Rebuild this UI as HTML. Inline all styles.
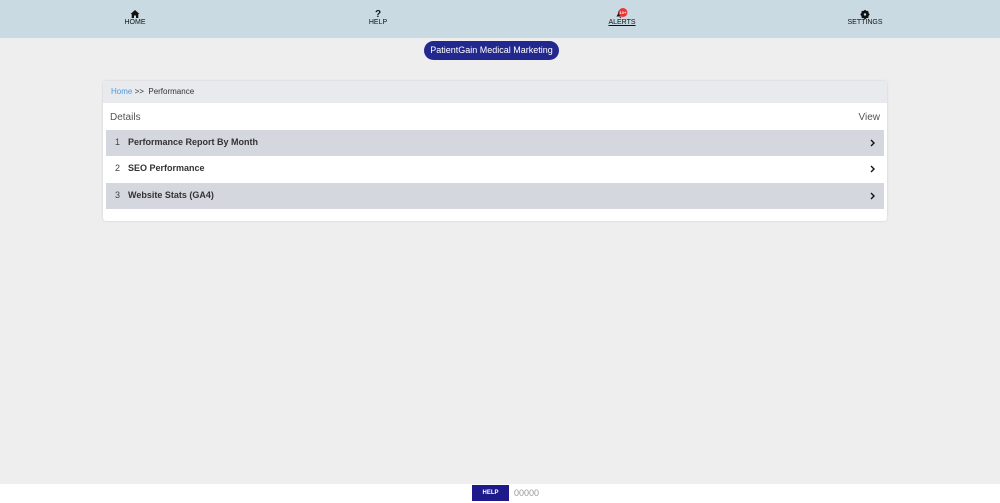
<!DOCTYPE html>
<html><head><style>
body{margin:0;width:1000px;height:503px;background:#eeeeee;font-family:"Liberation Sans",sans-serif;position:relative;overflow:hidden}
.nav{position:absolute;top:0;left:0;width:1000px;height:38px;background:#c9dae3}
.ni{position:absolute;top:10px;font-size:7px;color:#111;text-align:center;transform:translateX(-50%)}
.ni .ic{height:9px;line-height:9px;font-size:10px;font-weight:bold}
.pill{position:absolute;left:424px;top:41px;width:135px;height:19px;border-radius:10px;background:#23288f;color:#fff;font-size:9px;text-align:center;line-height:19px}
.card{position:absolute;left:103px;top:81px;width:784px;height:140px;background:#fff;border-radius:3px;box-shadow:0 0 2px #ccc}
.bc{height:22px;background:#e8eaed;font-size:8px;line-height:22px;padding-left:8px;color:#333}
.bc a{color:#4a9be0}
.hd{height:26px;font-size:10px;color:#555;line-height:30px;padding:0 7px}
.row{position:absolute;left:3px;width:778px;height:26px;font-size:9px;font-weight:bold;color:#333;line-height:25px}
.row .n{position:absolute;left:9px;font-weight:normal;color:#444;font-size:9px}
.row .t{position:absolute;left:22px}
.row .c{position:absolute;right:9px;top:9px}
.g{background:#d4d7de}
.foot{position:absolute;top:484px;left:0;width:1000px;height:19px;background:#fff}
.hb{position:absolute;left:472px;top:485px;width:37px;height:16px;background:#1e1a8c;color:#fff;font-size:6px;font-weight:bold;text-align:center;line-height:16px}
</style></head><body>
<div class="nav">
<div class="ni" style="left:135px"><div class="ic"><svg width="9" height="8" viewBox="0 0 9 8"><path d="M4.5 0L0 4h1.2v4h2.3V5.5h2V8h2.3V4H9z" fill="#111"/></svg></div>HOME</div>
<div class="ni" style="left:378px"><div class="ic">?</div>HELP</div>
<div class="ni" style="left:622px;text-decoration:underline"><div class="ic" style="position:relative"><svg width="8" height="8" viewBox="0 0 8 8" style="position:relative;left:-2px"><path d="M4 0C2 0 1.5 2 1.5 4L0 6.5h8L6.5 4C6.5 2 6 0 4 0zM3 7h2L4 8z" fill="#111"/></svg><span style="position:absolute;left:10px;top:-2px;width:9px;height:9px;border-radius:50%;background:#e33;color:#fff;font-size:4px;line-height:9px">10+</span></div>ALERTS</div>
<div class="ni" style="left:865px"><div class="ic"><svg width="9" height="9" viewBox="0 0 9 9"><circle cx="4.5" cy="4.5" r="3" fill="none" stroke="#111" stroke-width="2"/><path d="M4.5 0v9M0 4.5h9M1.3 1.3l6.4 6.4M7.7 1.3L1.3 7.7" stroke="#111" stroke-width="1.6"/><circle cx="4.5" cy="4.5" r="1.2" fill="#c9dae3"/></svg></div>SETTINGS</div>
</div>
<div class="pill">PatientGain Medical Marketing</div>
<div class="card">
<div class="bc"><a>Home</a> &gt;&gt; &nbsp;Performance</div>
<div class="hd">Details<span style="float:right">View</span></div>
<div class="row g" style="top:49px"><span class="n">1</span><span class="t">Performance Report By Month</span><svg class="c" width="5" height="8" viewBox="0 0 5 8"><path d="M1 1l3 3-3 3" fill="none" stroke="#111" stroke-width="1.4"/></svg></div>
<div class="row" style="top:75px"><span class="n">2</span><span class="t">SEO Performance</span><svg class="c" width="5" height="8" viewBox="0 0 5 8"><path d="M1 1l3 3-3 3" fill="none" stroke="#111" stroke-width="1.4"/></svg></div>
<div class="row g" style="top:102px"><span class="n">3</span><span class="t">Website Stats (GA4)</span><svg class="c" width="5" height="8" viewBox="0 0 5 8"><path d="M1 1l3 3-3 3" fill="none" stroke="#111" stroke-width="1.4"/></svg></div>
</div>
<div class="foot"></div>
<div class="hb">HELP</div>
<div style="position:absolute;left:514px;top:488px;font-size:9px;color:#999">00000</div>
</body></html>
